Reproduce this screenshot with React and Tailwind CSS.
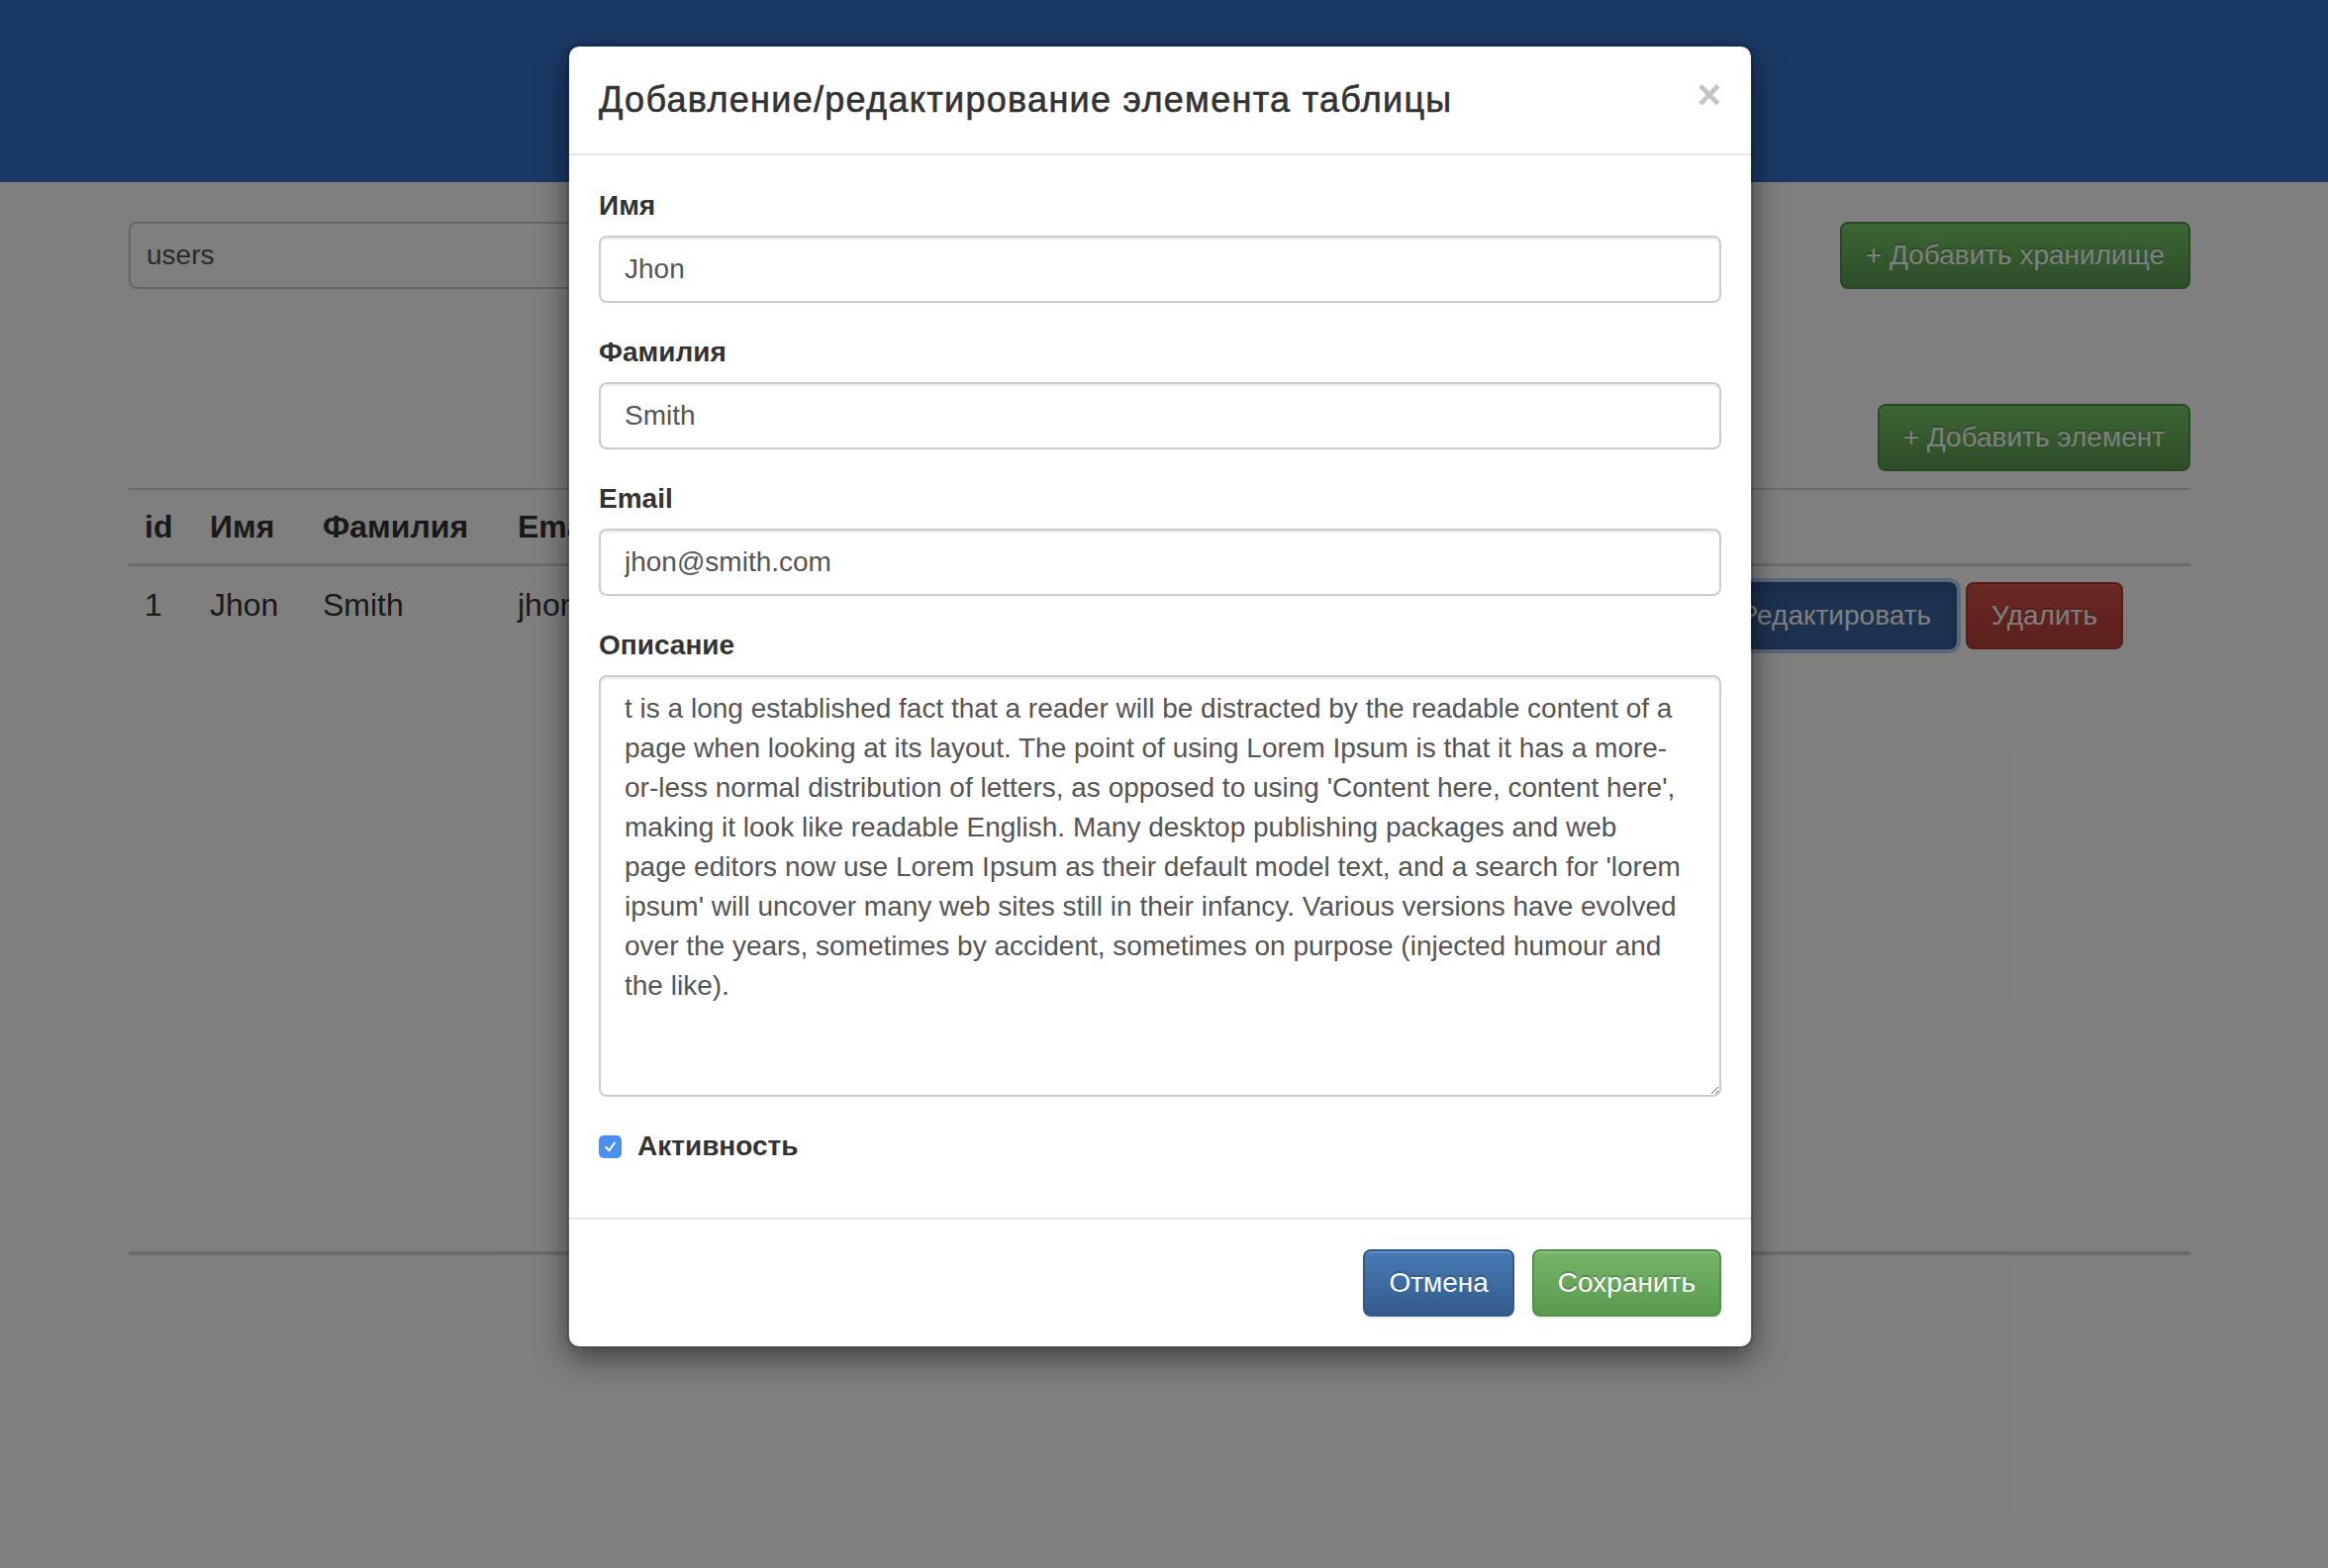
import React from "react";

const description = [
  "t is a long established fact that a reader will be distracted by the readable content of a",
  "page when looking at its layout. The point of using Lorem Ipsum is that it has a more-",
  "or-less normal distribution of letters, as opposed to using 'Content here, content here',",
  "making it look like readable English. Many desktop publishing packages and web",
  "page editors now use Lorem Ipsum as their default model text, and a search for 'lorem",
  "ipsum' will uncover many web sites still in their infancy. Various versions have evolved",
  "over the years, sometimes by accident, sometimes on purpose (injected humour and",
  "the like).",
].join("\n");

function Field({ label, value }) {
  return (
    <div className="mb-[30px]">
      <label className="block mb-[10px] text-[28px] leading-[40px] font-bold text-[#333]">{label}</label>
      <input
        readOnly
        value={value}
        className="block w-full h-[68px] px-[24px] text-[28px] text-[#555] bg-white border-2 border-[#ccc] rounded-[8px] shadow-[inset_0_2px_2px_rgba(0,0,0,0.075)] outline-none"
      />
    </div>
  );
}

export default function App() {
  return (
    <div className="relative h-[1584px] overflow-hidden bg-white [font-family:'Liberation_Sans',Arial,sans-serif]">
      {/* Page behind the modal */}
      <nav className="h-[184px] bg-[#3672cc]" />

      <div className="pl-[130px] pr-[139px]">
        <div className="flex items-center justify-between mt-[40px]">
          <input
            readOnly
            value="users"
            className="w-[1000px] h-[68px] px-[16px] text-[28px] text-[#555] bg-white border-2 border-[#ccc] rounded-[8px] outline-none"
          />
          <button className="h-[68px] px-[24px] text-[28px] text-white rounded-[8px] border-2 border-[#558f4a] bg-[linear-gradient(to_bottom,#78cc68,#5c9a50)] [text-shadow:0_-2px_0_rgba(0,0,0,0.2)]">
            + Добавить хранилище
          </button>
        </div>

        <div className="flex justify-end mt-[116px]">
          <button className="h-[68px] px-[24px] text-[28px] text-white rounded-[8px] border-2 border-[#558f4a] bg-[linear-gradient(to_bottom,#78cc68,#5c9a50)] [text-shadow:0_-2px_0_rgba(0,0,0,0.2)]">
            + Добавить элемент
          </button>
        </div>

        <table className="w-full mt-[17px] border-t-2 border-[#d6d6d6] text-[32px] leading-[46px] text-[#333] text-left">
          <thead>
            <tr className="border-b-[3px] border-[#d6d6d6]">
              <th className="w-[66px] px-[16px] py-[14px] font-bold">id</th>
              <th className="w-[114px] px-[16px] py-[14px] font-bold">Имя</th>
              <th className="w-[197px] px-[16px] py-[14px] font-bold">Фамилия</th>
              <th className="px-[16px] py-[14px] font-bold">Email</th>
              <th className="px-[16px] py-[14px]" />
            </tr>
          </thead>
          <tbody>
            <tr>
              <td className="p-[16px] align-top">1</td>
              <td className="p-[16px] align-top">Jhon</td>
              <td className="p-[16px] align-top">Smith</td>
              <td className="p-[16px] align-top">jhon@smith.com</td>
              <td className="p-[16px] pr-[68px] align-top">
                <div className="flex justify-end gap-[9px]">
                  <button className="h-[68px] px-[24px] text-[28px] text-white rounded-[8px] border-2 border-[#2d5c94] bg-[#3a62a0] shadow-[0_0_0_4px_rgba(120,170,230,0.55),inset_0_6px_10px_rgba(0,0,0,0.125)]">
                    Редактировать
                  </button>
                  <button className="h-[68px] px-[24px] text-[28px] text-white rounded-[8px] border-2 border-[#b03a34] bg-[linear-gradient(to_bottom,#d4544a,#b83e38)] [text-shadow:0_-2px_0_rgba(0,0,0,0.2)]">
                    Удалить
                  </button>
                </div>
              </td>
            </tr>
          </tbody>
        </table>

        <div className="mt-[592px] border-t-[4px] border-[#d6d6d6]" />
      </div>

      {/* Backdrop */}
      <div className="absolute inset-0 bg-black/50" />

      {/* Modal */}
      <div className="absolute left-[573px] top-[45px] w-[1198px] bg-white rounded-[12px] border-2 border-black/20 shadow-[0_10px_30px_rgba(0,0,0,0.5)] bg-clip-padding">
        <div className="flex items-start justify-between px-[30px] pt-[30px] pb-[30px] border-b-2 border-[#e5e5e5]">
          <h4 className="text-[36px] leading-[48px] text-[#333] tracking-[1.3px] [-webkit-text-stroke:0.6px_#333]">
            Добавление/редактирование элемента таблицы
          </h4>
          <button className="mt-[-2px] text-[42px] leading-[42px] font-bold text-[#c4c4c4]">×</button>
        </div>

        <div className="px-[30px] pt-[31px] pb-[30px]">
          <Field label="Имя" value="Jhon" />
          <Field label="Фамилия" value="Smith" />
          <Field label="Email" value="jhon@smith.com" />

          <div className="mb-[30px]">
            <label className="block mb-[10px] text-[28px] leading-[40px] font-bold text-[#333]">Описание</label>
            <textarea
              readOnly
              rows={10}
              wrap="off"
              value={description}
              className="block w-full h-[426px] px-[24px] py-[12px] text-[28px] leading-[40px] text-[#555] bg-white border-2 border-[#ccc] rounded-[8px] shadow-[inset_0_2px_2px_rgba(0,0,0,0.075)] outline-none overflow-hidden"
            />
          </div>

          <label className="flex items-center h-[40px] mb-[22px]">
            <span className="flex items-center justify-center w-[23px] h-[23px] rounded-[5px] bg-[#4a8ff2]">
              <svg width="15" height="15" viewBox="0 0 14 14" fill="none">
                <path d="M3 7.5 L6 10.5 L11 3.5" stroke="white" strokeWidth="2" strokeLinecap="round" strokeLinejoin="round" />
              </svg>
            </span>
            <span className="ml-[16px] text-[28px] font-bold text-[#333]">Активность</span>
          </label>
        </div>

        <div className="flex justify-end gap-[18px] p-[30px] border-t-2 border-[#e5e5e5]">
          <button className="h-[68px] px-[24px] text-[28px] text-white rounded-[8px] border-2 border-[#2e5a8c] bg-[linear-gradient(to_bottom,#477bb6,#345b8b)] shadow-[inset_0_2px_0_rgba(255,255,255,0.15),0_2px_2px_rgba(0,0,0,0.075)] [text-shadow:0_-2px_0_rgba(0,0,0,0.2)]">
            Отмена
          </button>
          <button className="h-[68px] px-[24px] text-[28px] text-white rounded-[8px] border-2 border-[#54904a] bg-[linear-gradient(to_bottom,#76b569,#5a9a4f)] shadow-[inset_0_2px_0_rgba(255,255,255,0.15),0_2px_2px_rgba(0,0,0,0.075)] [text-shadow:0_-2px_0_rgba(0,0,0,0.2)]">
            Сохранить
          </button>
        </div>
      </div>
    </div>
  );
}
